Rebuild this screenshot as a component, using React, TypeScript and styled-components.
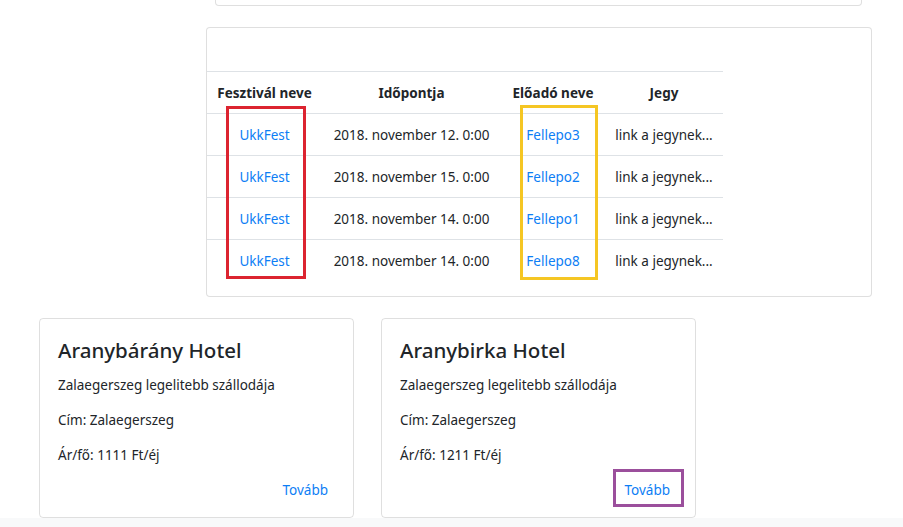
import React from "react";
import styled, { createGlobalStyle } from "styled-components";

const Global = createGlobalStyle`
  html, body { margin: 0; padding: 0; background: #fff; }
  body {
    font-family: "Noto Sans", "Open Sans", sans-serif;
    font-size: 13.5px;
    color: #212529;
    overflow: hidden;
  }
`;

const Page = styled.div`
  width: 903px;
  height: 527px;
  display: flex;
  flex-direction: column;
  overflow: hidden;
`;

const Main = styled.main`
  height: 518px;
  flex: none;
  display: flex;
  flex-direction: column;
  background: #fff;
`;

const FooterStrip = styled.div`
  flex: 1;
  background: #f8f9fa;
`;

const Card = styled.div<{ $left: number; $width: number; $height: number }>`
  box-sizing: border-box;
  position: relative;
  margin-left: ${(p) => p.$left}px;
  width: ${(p) => p.$width}px;
  height: ${(p) => p.$height}px;
  border: 1px solid rgba(0, 0, 0, 0.125);
  border-radius: 4px;
  background: #fff;
  flex: none;
`;

const TopCard = styled(Card)`
  margin-top: -30px;
`;

const TableCard = styled(Card)`
  margin-top: 21px;
  padding-top: 43px;
`;

const Table = styled.table`
  border-collapse: collapse;
  table-layout: fixed;
  width: 516px;
`;

const Col = styled.col<{ $w: number }>`
  width: ${(p) => p.$w}px;
`;

const Th = styled.th`
  padding: 11px 0 9px;
  line-height: 21px;
  font-weight: 700;
  text-align: center;
  border-top: 1px solid #dee2e6;
  white-space: nowrap;
`;

const Td = styled.td`
  padding: 11px 0 9px;
  line-height: 21px;
  text-align: center;
  border-top: 1px solid #dee2e6;
  white-space: nowrap;
`;

const Link = styled.a`
  color: #0d7ef5;
  text-decoration: none;
`;

const Highlight = styled.div<{ $color: string }>`
  position: absolute;
  box-sizing: border-box;
  border: 3px solid ${(p) => p.$color};
  pointer-events: none;
`;

const HotelRow = styled.div`
  display: flex;
  gap: 27px;
  margin-top: 21px;
  margin-left: 39px;
`;

const HotelCard = styled.div`
  box-sizing: border-box;
  position: relative;
  width: 315px;
  height: 200px;
  border: 1px solid rgba(0, 0, 0, 0.125);
  border-radius: 4px;
  padding: 18px 13px 0 18px;
  display: flex;
  flex-direction: column;
`;

const HotelTitle = styled.h4`
  margin: 0 0 11px;
  font-size: 20.5px;
  line-height: 26px;
  font-weight: 500;
`;

const HotelText = styled.p<{ $last?: boolean }>`
  margin: 0 0 ${(p) => (p.$last ? 7 : 13)}px;
  padding-top: 1px;
  line-height: 21px;
`;

const Actions = styled.div`
  display: flex;
  justify-content: flex-end;
`;

const LinkButton = styled.button`
  font-family: inherit;
  font-size: 13.5px;
  line-height: 21px;
  padding: 6px 11px;
  border: 1px solid transparent;
  background: none;
  color: #0d7ef5;
  cursor: pointer;
`;

const rows = [
  { date: "2018. november 12. 0:00", perf: "Fellepo3" },
  { date: "2018. november 15. 0:00", perf: "Fellepo2" },
  { date: "2018. november 14. 0:00", perf: "Fellepo1" },
  { date: "2018. november 14. 0:00", perf: "Fellepo8" },
];

const hotels = [
  { name: "Aranybárány Hotel", price: "1111", marked: false },
  { name: "Aranybirka Hotel", price: "1211", marked: true },
];

export default function App() {
  return (
    <Page>
      <Global />
      <Main>
        <TopCard $left={215} $width={647} $height={36} />
        <TableCard $left={206} $width={666} $height={270}>
          <Table>
            <colgroup>
              <Col $w={115} />
              <Col $w={179} />
              <Col $w={104} />
              <Col $w={118} />
            </colgroup>
            <thead>
              <tr>
                <Th>Fesztivál neve</Th>
                <Th>Időpontja</Th>
                <Th>Előadó neve</Th>
                <Th>Jegy</Th>
              </tr>
            </thead>
            <tbody>
              {rows.map((r, i) => (
                <tr key={i}>
                  <Td>
                    <Link href="#">UkkFest</Link>
                  </Td>
                  <Td>{r.date}</Td>
                  <Td>
                    <Link href="#">{r.perf}</Link>
                  </Td>
                  <Td>link a jegynek...</Td>
                </tr>
              ))}
            </tbody>
          </Table>
          <Highlight $color="#dc2430" style={{ left: 19, top: 78, width: 80, height: 173 }} />
          <Highlight $color="#f5c623" style={{ left: 313, top: 77, width: 78, height: 175 }} />
        </TableCard>
        <HotelRow>
          {hotels.map((h) => (
            <HotelCard key={h.name}>
              <HotelTitle>{h.name}</HotelTitle>
              <HotelText>Zalaegerszeg legelitebb szállodája</HotelText>
              <HotelText>Cím: Zalaegerszeg</HotelText>
              <HotelText $last>Ár/fő: {h.price} Ft/éj</HotelText>
              <Actions>
                <LinkButton>Tovább</LinkButton>
              </Actions>
              {h.marked && (
                <Highlight $color="#9b4f9c" style={{ left: 231, top: 150, width: 71, height: 38 }} />
              )}
            </HotelCard>
          ))}
        </HotelRow>
      </Main>
      <FooterStrip />
    </Page>
  );
}
